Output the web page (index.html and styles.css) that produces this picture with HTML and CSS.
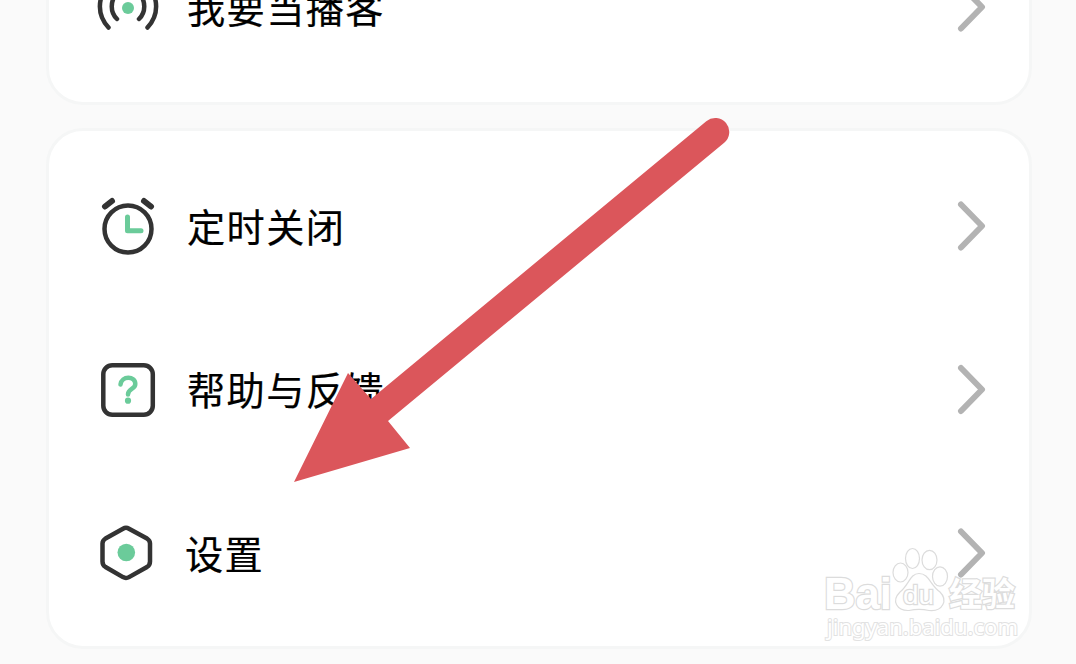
FILE: index.html
```
<!DOCTYPE html>
<html lang="zh-CN">
<head>
    <meta charset="UTF-8">
    <meta name="viewport" content="width=device-width, initial-scale=1.0">
    <title>设置</title>
    <link rel="stylesheet" href="styles.css">
</head>
<body>
    <main>
        <section class="card first">
            <div class="row">
                <svg class="icon" viewBox="0 0 64 64">
                    <path d="M12.500 10C1 23 1 40 12.500 52.500M51.500 10C63 23 63 40 51.500 52.500"/>
                    <path d="M21 18C14 26 14 37 21 44M43 18C50 26 50 37 43 44"/>
                    <circle class="green-fill" cx="32" cy="33" r="6"/>
                </svg>
                <span class="label">我要当播客</span>
                <svg class="arrow" viewBox="0 0 32 52"><path d="M4 4.500L25 26L4 47.500"/></svg>
            </div>
        </section>
        <section class="card">
            <div class="row">
                <svg class="icon" viewBox="0 0 64 64">
                    <circle cx="32" cy="35" r="23.500"/>
                    <path class="bell" d="M9 12.500L16 7M48 7L55 12.500"/>
                    <path class="green-line" d="M31.500 23V36.700H45"/>
                </svg>
                <span class="label">定时关闭</span>
                <svg class="arrow" viewBox="0 0 32 52"><path d="M4 4.500L25 26L4 47.500"/></svg>
            </div>
            <div class="row">
                <svg class="icon" viewBox="0 0 64 64">
                    <rect x="7.300" y="8.300" width="49.500" height="49.500" rx="9"/>
                    <path class="green-line question" d="M24.500 27.500C25.500 18.500 39.300 18.500 39.300 27C39.300 32.500 32 31.500 32 37.500"/>
                    <circle class="green-fill" cx="32" cy="43.700" r="3.100"/>
                </svg>
                <span class="label">帮助与反馈</span>
                <svg class="arrow" viewBox="0 0 32 52"><path d="M4 5L25 26.500L4 48"/></svg>
            </div>
            <div class="row settings">
                <svg class="icon" viewBox="0 0 64 64">
                    <path d="M29 7.700Q32 6 35 7.700L53 17.500Q56 19.500 56 22.500V40.500Q56 44 53 46L35 56.100Q32 57.700 29 56.100L11.500 46Q8.500 44 8.500 40.500V22.500Q8.500 19.500 11.500 17.500Z"/>
                    <circle class="green-fill" cx="32.300" cy="31.500" r="8.800"/>
                </svg>
                <span class="label">设置</span>
                <svg class="arrow" viewBox="0 0 32 52"><path d="M4 4.500L25 26L4 47.500"/></svg>
            </div>
        </section>
    </main>
    <svg class="pointer" viewBox="0 0 1076 664">
        <path d="M294 482L348 373L371 399L706.300 121.200A14 14 0 0 1 724.200 142.800L388 421L410 448Z"/>
    </svg>
    <svg class="watermark" viewBox="0 0 210 110">
        <text class="brand" x="12" y="65" textLength="68" lengthAdjust="spacingAndGlyphs">Bai</text>
        <ellipse cx="88.500" cy="28.500" rx="7.500" ry="9.500"/>
        <ellipse cx="100.500" cy="14.500" rx="7" ry="10"/>
        <ellipse cx="117.500" cy="16" rx="7.500" ry="9.700"/>
        <ellipse cx="128" cy="32.500" rx="7.500" ry="9.700"/>
        <path d="M107 29.500C98 29.500 97 41 88 48C79 57 85 67 97 66.500C104 65 110 65 117 66.500C131 68 136 56 128 48C118 41 117 29.500 107 29.500Z"/>
        <text class="du" x="91" y="60" textLength="31" lengthAdjust="spacingAndGlyphs">du</text>
        <text class="zh" x="137" y="62" textLength="66" lengthAdjust="spacingAndGlyphs">经验</text>
        <text class="url" x="15" y="91" textLength="191" lengthAdjust="spacingAndGlyphs">jingyan.baidu.com</text>
    </svg>
</body>
</html>
```
FILE: styles.css
```
html, body {
    height: 664px;
    overflow: hidden;
}
body {
    margin: 0px;
    background-color: #fafafa;
    font-family: "Noto Sans CJK SC", sans-serif;
    color: #000;
}
main {
    display: flex;
    flex-direction: column;
    gap: 23px;
    padding: 0px 44px 0px 46px;
}
.card {
    box-sizing: border-box;
    background-color: white;
    border: 3px solid #f5f6f6;
    border-radius: 37px;
    padding: 13.5px 40px 11px 47px;
}
.card.first {
    margin-top: -90px;
    padding: 12px 40px 13px 47px;
}
.row {
    display: flex;
    align-items: center;
    height: 163.5px;
}
.icon {
    width: 64px;
    height: 64px;
    fill: none;
    stroke: #333;
    stroke-width: 4.5;
    stroke-linecap: round;
    stroke-linejoin: round;
}
.icon .bell {
    stroke-width: 6;
}
.icon .green-line {
    stroke: #6bcb9a;
    stroke-width: 5;
}
.icon .question {
    stroke-width: 4.5;
}
.icon .green-fill {
    fill: #6bcb9a;
    stroke: none;
}
.label {
    flex: 1;
    margin-left: 27px;
    font-size: 38.2px;
    letter-spacing: 1.4px;
    line-height: 60px;
    -webkit-text-stroke: 0.2px #000;
}
.arrow {
    width: 32px;
    height: 52px;
    fill: none;
    stroke: #b3b3b3;
    stroke-width: 6;
    stroke-linecap: round;
    stroke-linejoin: round;
}
.settings .icon {
    margin-left: -2px;
}
.pointer {
    position: absolute;
    left: 0px;
    top: 0px;
    width: 1076px;
    height: 664px;
    fill: #db565b;
}
.watermark {
    position: absolute;
    left: 812px;
    top: 544px;
    width: 210px;
    height: 110px;
    fill: white;
    stroke: #dcdcdc;
    stroke-width: 1.2;
}
.watermark text {
    font-family: "Liberation Sans", sans-serif;
    paint-order: stroke;
    stroke-width: 2.4;
}
.watermark .brand {
    font-size: 45px;
    font-weight: bold;
}
.watermark .du {
    font-size: 26px;
}
.watermark .zh {
    font-family: "Noto Sans CJK SC", sans-serif;
    font-size: 33px;
    font-weight: bold;
}
.watermark .url {
    font-family: "Noto Sans", sans-serif;
    font-size: 22px;
    stroke: #e2e2e2;
    stroke-width: 2;
}
```
